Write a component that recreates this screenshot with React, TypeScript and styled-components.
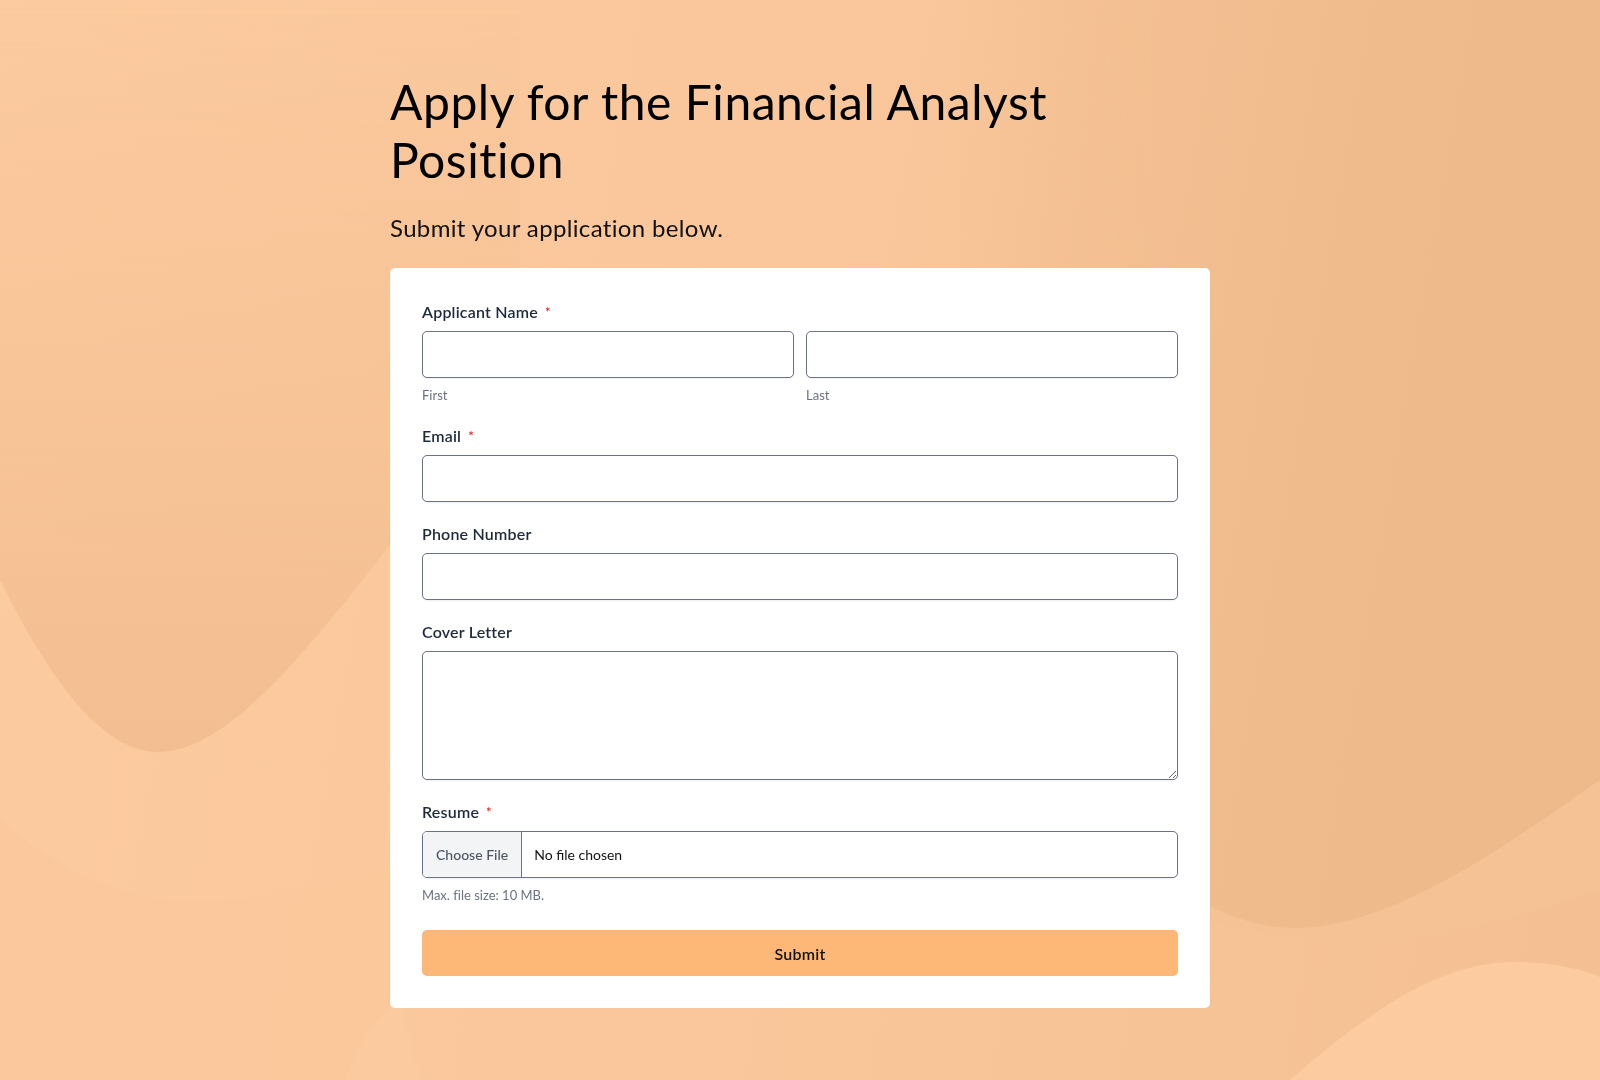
import React from "react";
import styled, { createGlobalStyle } from "styled-components";

const GlobalStyle = createGlobalStyle`
  html, body {
    margin: 0;
    padding: 0;
  }
  body {
    font-family: Lato, "Noto Sans", Arial, sans-serif;
    font-variant-ligatures: none;
    background: linear-gradient(100deg, #fccb9f 0%, #f9c79b 45%, #f4c093 100%);
    min-height: 100vh;
    overflow: hidden;
  }
  * { box-sizing: border-box; }
`;

const Backdrop = styled.svg`
  position: fixed;
  inset: 0;
  width: 100%;
  height: 100%;
  z-index: 0;
  pointer-events: none;
`;

const Page = styled.main`
  position: relative;
  z-index: 1;
  display: flex;
  justify-content: center;
  padding-top: 73px;
  min-height: 100vh;
`;

const Container = styled.div`
  width: 820px;
  display: flex;
  flex-direction: column;
`;

const Title = styled.h1`
  margin: 0;
  max-width: 720px;
  font-family: Lato, sans-serif;
  font-weight: 400;
  font-size: 48px;
  line-height: 1.2;
  letter-spacing: 0.55px;
  color: #000;
`;

const Subtitle = styled.p`
  margin: 22px 0 22px;
  font-size: 24px;
  line-height: 36px;
  letter-spacing: 0.35px;
  color: #111;
`;

const Card = styled.form`
  background: #fff;
  border-radius: 5px;
  padding: 32px;
  display: flex;
  flex-direction: column;
  gap: 20px;
`;

const Field = styled.div`
  display: flex;
  flex-direction: column;
`;

const Label = styled.label`
  font-size: 16px;
  line-height: 24px;
  font-weight: 600;
  letter-spacing: 0.2px;
  color: #1e293b;
  margin-bottom: 7px;
`;

const Required = styled.span`
  color: #dc2626;
  font-size: 13px;
  margin-left: 7px;
  vertical-align: 1px;
`;

const NameRow = styled.div`
  display: grid;
  grid-template-columns: 1fr 1fr;
  gap: 12px;
`;

const SubField = styled.div`
  display: flex;
  flex-direction: column;
`;

const inputBase = `
  width: 100%;
  border: 1px solid #6b7280;
  border-radius: 5px;
  background: #fff;
  box-shadow: 0 1px 2px rgba(17, 24, 39, 0.07);
  font-family: Lato, sans-serif;
  font-size: 15px;
  color: #111;
  outline: none;
`;

const TextInput = styled.input`
  ${inputBase}
  height: 47px;
  padding: 0 12px;
`;

const TextArea = styled.textarea`
  ${inputBase}
  height: 129px;
  padding: 10px 12px;
  resize: vertical;
  display: block;
`;

const FileInput = styled.input`
  ${inputBase}
  height: 47px;
  padding: 0;
  overflow: hidden;
  font-size: 14px;
  color: #111;

  &::file-selector-button {
    height: 100%;
    margin: 0 12px 0 0;
    padding: 0 13px;
    border: none;
    border-right: 1px solid #6b7280;
    background: #f3f4f6;
    color: #4b5563;
    font-family: Lato, sans-serif;
    font-size: 14px;
    font-weight: 500;
  }
`;

const SubLabel = styled.span`
  margin-top: 8px;
  font-size: 13px;
  line-height: 18px;
  color: #6b7280;
`;

const Hint = styled.span`
  margin-top: 8px;
  font-size: 13px;
  line-height: 18px;
  color: #6b7280;
`;

const SubmitButton = styled.button`
  margin-top: 6px;
  height: 46px;
  width: 100%;
  border: none;
  border-radius: 5px;
  background: #fdb878;
  color: #111;
  font-family: Lato, sans-serif;
  font-size: 16px;
  font-weight: 600;
  letter-spacing: 0.2px;
  cursor: pointer;
`;

function Background() {
  return (
    <Backdrop viewBox="0 0 1600 1080" preserveAspectRatio="none" aria-hidden="true">
      <defs>
        <linearGradient id="leftBlob" x1="0" y1="0" x2="0" y2="1">
          <stop offset="0" stopColor="#f6c296" stopOpacity="0" />
          <stop offset="0.55" stopColor="#f5c195" stopOpacity="0.7" />
          <stop offset="1" stopColor="#f2be91" stopOpacity="1" />
        </linearGradient>
        <linearGradient id="rightBlob" x1="0" y1="0" x2="1" y2="0.25">
          <stop offset="0" stopColor="#f1bd8f" stopOpacity="0" />
          <stop offset="0.3" stopColor="#f1bd8f" stopOpacity="0.6" />
          <stop offset="0.65" stopColor="#efbb8d" stopOpacity="1" />
          <stop offset="1" stopColor="#eeba8c" stopOpacity="1" />
        </linearGradient>
        <linearGradient id="rightBand" x1="0" y1="0" x2="1" y2="0">
          <stop offset="0" stopColor="#f5c296" stopOpacity="0" />
          <stop offset="0.25" stopColor="#f5c296" stopOpacity="1" />
          <stop offset="1" stopColor="#f5c296" stopOpacity="1" />
        </linearGradient>
      </defs>
      <path
        d="M0,0 L0,580 C40,660 95,752 158,752 C225,752 300,660 390,545 C440,480 480,420 520,360 L520,0 Z"
        fill="url(#leftBlob)"
      />
      <path
        d="M0,820 C60,870 120,900 190,902 C260,904 330,885 400,860 L400,1080 L0,1080 Z"
        fill="#f9c79b"
        opacity="0.7"
      />
      <path
        d="M345,1080 C360,1040 375,1015 400,1000 L420,1080 Z"
        fill="#fbca9e"
      />
      <path
        d="M1000,0 L1600,0 L1600,890 C1540,910 1480,930 1400,937 C1320,944 1250,935 1150,905 L1000,820 Z"
        fill="url(#rightBand)"
      />
      <path
        d="M960,0 L1600,0 L1600,780 C1500,850 1390,928 1295,928 C1250,928 1215,910 1170,885 L960,760 Z"
        fill="url(#rightBlob)"
      />
      <path
        d="M1290,1080 C1370,1010 1440,962 1515,962 C1555,962 1585,970 1600,977 L1600,1080 Z"
        fill="#fccb9f"
      />
    </Backdrop>
  );
}

export default function App() {
  return (
    <>
      <GlobalStyle />
      <Background />
      <Page>
        <Container>
          <Title>Apply for the Financial Analyst Position</Title>
          <Subtitle>Submit your application below.</Subtitle>
          <Card onSubmit={(e) => e.preventDefault()}>
            <Field>
              <Label>
                Applicant Name<Required>*</Required>
              </Label>
              <NameRow>
                <SubField>
                  <TextInput type="text" aria-label="First" />
                  <SubLabel>First</SubLabel>
                </SubField>
                <SubField>
                  <TextInput type="text" aria-label="Last" />
                  <SubLabel>Last</SubLabel>
                </SubField>
              </NameRow>
            </Field>
            <Field>
              <Label htmlFor="email">
                Email<Required>*</Required>
              </Label>
              <TextInput id="email" type="email" />
            </Field>
            <Field>
              <Label htmlFor="phone">Phone Number</Label>
              <TextInput id="phone" type="tel" />
            </Field>
            <Field>
              <Label htmlFor="cover">Cover Letter</Label>
              <TextArea id="cover" />
            </Field>
            <Field>
              <Label htmlFor="resume">
                Resume<Required>*</Required>
              </Label>
              <FileInput id="resume" type="file" />
              <Hint>Max. file size: 10 MB.</Hint>
            </Field>
            <SubmitButton type="submit">Submit</SubmitButton>
          </Card>
        </Container>
      </Page>
    </>
  );
}
